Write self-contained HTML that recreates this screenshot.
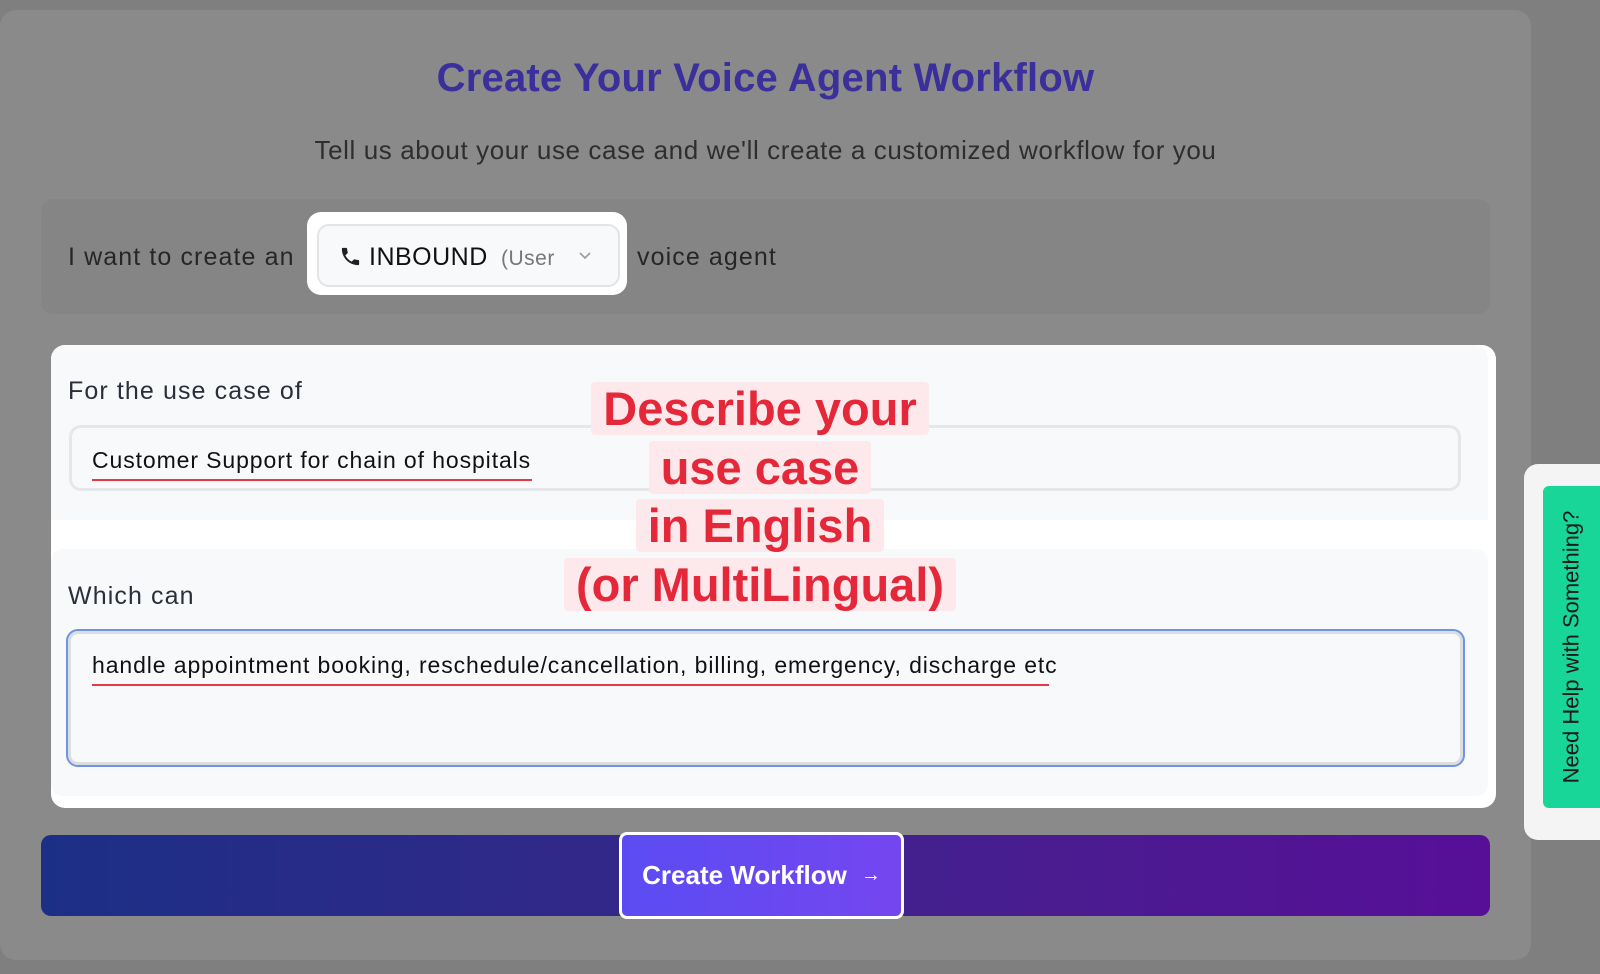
<!DOCTYPE html>
<html><head><meta charset="utf-8"><style>
*{box-sizing:border-box;margin:0;padding:0}
body{width:1600px;height:974px;background:#7f7f7f;font-family:"Liberation Sans",sans-serif;position:relative;overflow:hidden}
.a{position:absolute;white-space:nowrap}
.card{left:0;top:10px;width:1531px;height:950px;background:#8a8a8a;border-radius:16px}
.title{left:0;width:1531px;top:56px;text-align:center;font-size:40px;font-weight:bold;color:#3b2f9c;letter-spacing:0.2px}
.sub{left:0;width:1531px;top:135px;text-align:center;font-size:26px;color:#2e2e2e;letter-spacing:0.6px}
.row{left:41px;top:199px;width:1449px;height:115px;background:#858585;border-radius:12px}
.t{font-size:25px;color:#262626;letter-spacing:1.1px}
.hl{left:307px;top:212px;width:320px;height:83px;background:#fff;border-radius:14px}
.sel{left:317px;top:224px;width:303px;height:63px;background:#f8f9fb;border:2px solid #e2e4e8;border-radius:12px}
.white{left:51px;top:345px;width:1445px;height:463px;background:#fff;border-radius:14px}
.sec1{left:51px;top:345px;width:1437px;height:175px;background:#f8f9fb;border-radius:14px 14px 0 0}
.sec2{left:51px;top:549px;width:1437px;height:247px;background:#f8f9fb;border-radius:12px}
.inp{left:69px;top:425px;width:1392px;height:66px;background:#f8f9fb;border:3px solid #e6e7ea;border-radius:12px}
.ta{left:66px;top:629px;width:1399px;height:138px;background:#f8f9fb;border:2px solid #6f95e0;box-shadow:inset 0 0 0 3px #dcdde0;border-radius:12px}
.ul{height:2px;background:#e23a48}
.it{font-size:23px;color:#111;letter-spacing:0.9px}
.bar{left:41px;top:835px;width:1449px;height:81px;border-radius:10px;background:linear-gradient(90deg,#1c2f86,#33288a 40%,#4a1c90 70%,#570f98)}
.btn{left:619px;top:832px;width:285px;height:87px;background:linear-gradient(90deg,#5b4cf2,#7446f0);border:3px solid #fff;border-radius:8px;color:#fff;font-size:26px;font-weight:bold;display:flex;align-items:center;justify-content:center;gap:14px}
.red{left:0;width:1520px;text-align:center;font-size:47px;font-weight:bold;color:#e4283a}
.red span{background:#fde9eb;padding:0 12px;border-radius:4px}
.help{left:1524px;top:464px;width:90px;height:376px;background:#f4f4f4;border-radius:14px}
.green{left:1543px;top:486px;width:70px;height:322px;background:#17d697;border-radius:6px}
.vt{left:1543px;top:486px;width:57px;height:322px;display:flex;align-items:center;justify-content:center}
.vt div{transform:rotate(-90deg);white-space:nowrap;font-size:22px;color:#1a1a1a}
</style></head><body>
<div class="a card"></div>
<div class="a title">Create Your Voice Agent Workflow</div>
<div class="a sub">Tell us about your use case and we'll create a customized workflow for you</div>
<div class="a row"></div>
<div class="a t" style="left:68px;top:243px">I want to create an</div>
<div class="a hl"></div>
<div class="a sel"></div>
<svg class="a" style="left:339px;top:245px" width="23" height="23" viewBox="0 0 24 24"><path d="M6.6 10.8c1.4 2.8 3.8 5.1 6.6 6.6l2.2-2.2c.3-.3.7-.4 1-.2 1.1.4 2.3.6 3.6.6.6 0 1 .4 1 1V20c0 .6-.4 1-1 1C10.6 21 3 13.4 3 4c0-.6.4-1 1-1h3.5c.6 0 1 .4 1 1 0 1.3.2 2.5.6 3.6.1.3 0 .7-.2 1z" fill="#222"/></svg>
<div class="a t" style="left:369px;top:243px;color:#111;letter-spacing:0.5px">INBOUND</div>
<div class="a" style="left:501px;top:247px;font-size:21px;color:#777;letter-spacing:0.5px">(User</div>
<svg class="a" style="left:577px;top:249px" width="16" height="12" viewBox="0 0 16 12"><path d="M3 4l5 5 5-5" fill="none" stroke="#999" stroke-width="1.6"/></svg>
<div class="a t" style="left:637px;top:243px">voice agent</div>
<div class="a white"></div>
<div class="a sec1"></div>
<div class="a sec2"></div>
<div class="a t" style="left:68px;top:377px;color:#2a2f3a">For the use case of</div>
<div class="a inp"></div>
<div class="a it" style="left:92px;top:447px">Customer Support for chain of hospitals</div>
<div class="a ul" style="left:92px;top:479px;width:440px"></div>
<div class="a t" style="left:68px;top:582px;color:#2a2f3a">Which can</div>
<div class="a ta"></div>
<div class="a it" style="left:92px;top:652px">handle appointment booking, reschedule/cancellation, billing, emergency, discharge etc</div>
<div class="a ul" style="left:92px;top:684px;width:957px"></div>
<div class="a red" style="top:381px"><span>Describe your</span></div>
<div class="a red" style="top:440px"><span>use case</span></div>
<div class="a red" style="top:498px"><span>in English</span></div>
<div class="a red" style="top:557px"><span>(or MultiLingual)</span></div>
<div class="a bar"></div>
<div class="a btn">Create Workflow <span style="font-size:20px">&#8594;</span></div>
<div class="a help"></div>
<div class="a green"></div>
<div class="a vt"><div>Need Help with Something?</div></div>
</body></html>
